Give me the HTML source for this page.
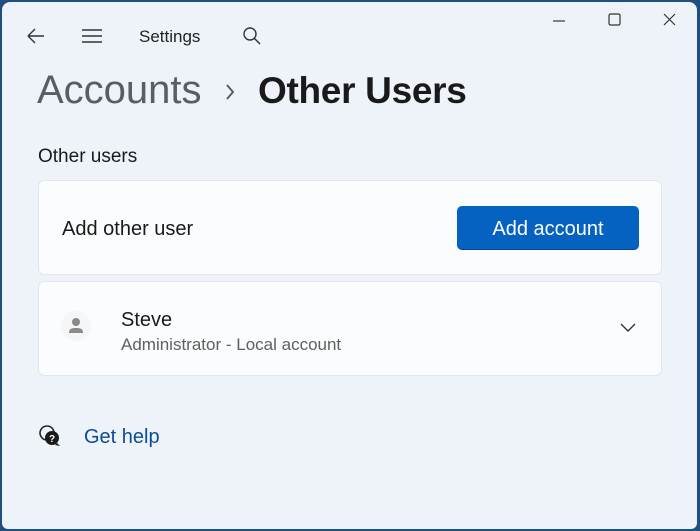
<!DOCTYPE html>
<html><head><meta charset="utf-8"><style>
html,body{margin:0;padding:0;width:700px;height:531px;overflow:hidden;background:#1f4f7e;font-family:"Liberation Sans",sans-serif;}
.win{position:absolute;left:2px;top:2px;width:695px;height:527px;background:#eef3f9;border-radius:8px 8px 6px 6px;}
.t{position:absolute;white-space:nowrap;}
.card{position:absolute;left:38px;width:624px;background:#fafcfd;border:1px solid #e2e6ea;border-radius:6px;box-sizing:border-box;}
</style></head><body>
<div class="win">
<svg style="position:absolute;left:24px;top:26px" width="20" height="16"><path d="M2 8H18M2 8L9 1M2 8L9 15" stroke="#333" stroke-width="1.4" fill="none"/></svg>
<svg style="position:absolute;left:79px;top:26px" width="22" height="16"><path d="M1 2H21M1 8H21M1 14H21" stroke="#333" stroke-width="1.4"/></svg>
<div class="t" style="left:137px;top:25px;font-size:17px;color:#222">Settings</div>
<svg style="position:absolute;left:240px;top:24px" width="20" height="20"><circle cx="8" cy="8" r="6" stroke="#333" stroke-width="1.4" fill="none"/><path d="M12.5 12.5L18 18" stroke="#333" stroke-width="1.5"/></svg>
<svg style="position:absolute;left:550px;top:17px" width="16" height="4"><path d="M1 2H13" stroke="#333" stroke-width="1.2"/></svg>
<svg style="position:absolute;left:606px;top:11px" width="14" height="14"><rect x="1" y="1" width="11" height="11" rx="1.5" stroke="#333" stroke-width="1.2" fill="none"/></svg>
<svg style="position:absolute;left:661px;top:11px" width="14" height="14"><path d="M1 1L12 12M12 1L1 12" stroke="#333" stroke-width="1.2"/></svg>
<div class="t" style="left:35px;top:66px;font-size:40px;color:#5a5d61">Accounts</div>
<svg style="position:absolute;left:222px;top:81px" width="12" height="18"><path d="M3 2L9 9L3 16" stroke="#555" stroke-width="1.8" fill="none"/></svg>
<div class="t" style="left:256px;top:68px;font-size:37px;font-weight:bold;color:#1a1a1a;letter-spacing:-0.3px">Other Users</div>
<div class="t" style="left:36px;top:144px;font-size:19px;color:#1a1a1a">Other users</div>
</div>
<div class="card" style="top:180px;height:95px">
<div class="t" style="left:23px;top:37px;font-size:20px;color:#1a1a1a">Add other user</div>
<div style="position:absolute;left:418px;top:25px;width:182px;height:44px;background:#0562c1;border-radius:5px;border-bottom:1px solid #03449b;box-sizing:border-box;color:#fff;font-size:20px;text-align:center;line-height:46px">Add account</div>
</div>
<div class="card" style="top:281px;height:95px">
<div style="position:absolute;left:22px;top:29px;width:30px;height:30px;border-radius:50%;background:#f5f6f7"></div>
<svg style="position:absolute;left:29px;top:34px" width="16" height="20"><circle cx="8" cy="6" r="4" fill="#8a8a8a"/><path d="M1 17C1 13 3 12 8 12S15 13 15 17Z" fill="#8a8a8a"/></svg>
<div class="t" style="left:82px;top:27px;font-size:20px;color:#1a1a1a">Steve</div>
<div class="t" style="left:82px;top:53px;font-size:17px;color:#606060">Administrator - Local account</div>
<svg style="position:absolute;left:581px;top:41px" width="16" height="10"><path d="M1 1L8 8L15 1" stroke="#333" stroke-width="1.4" fill="none"/></svg>
</div>
<svg style="position:absolute;left:38px;top:424px" width="24" height="24"><path d="M9 2a7 7 0 1 0 0.1 0" stroke="#222" stroke-width="1.6" fill="none"/><circle cx="14" cy="14" r="7" fill="#1a1a1a"/><path d="M19 19L22 22L17 21Z" fill="#1a1a1a"/><text x="14" y="18" font-size="10" font-weight="bold" fill="#fff" text-anchor="middle" font-family="Liberation Sans">?</text></svg>
<div class="t" style="left:84px;top:426px;font-size:20px;color:#0b4d94">Get help</div>
</body></html>
